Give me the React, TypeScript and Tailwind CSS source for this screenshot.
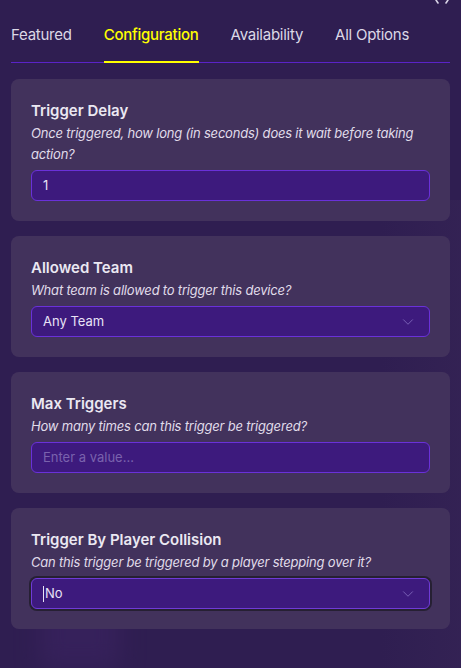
import { ChevronDown } from 'lucide-react';

type Field = {
  title: string;
  desc: string;
  kind: 'input' | 'select';
  value?: string;
  placeholder?: string;
  focused?: boolean;
};

const fields: Field[] = [
  { title: 'Trigger Delay', desc: 'Once triggered, how long (in seconds) does it wait before taking action?', kind: 'input', value: '1' },
  { title: 'Allowed Team', desc: 'What team is allowed to trigger this device?', kind: 'select', value: 'Any Team' },
  { title: 'Max Triggers', desc: 'How many times can this trigger be triggered?', kind: 'input', placeholder: 'Enter a value...' },
  { title: 'Trigger By Player Collision', desc: 'Can this trigger be triggered by a player stepping over it?', kind: 'select', value: 'No', focused: true },
];

const tabs = ['Featured', 'Configuration', 'Availability', 'All Options'];

export default function App() {
  return (
    <div
      className="relative w-[461px] h-[668px] overflow-hidden bg-[#2f1e51] text-[#ece8f4]"
      style={{ fontFamily: 'Inter, "Noto Sans", sans-serif' }}
    >
      {/* blurred backdrop hints */}
      <div className="absolute left-[40px] bottom-0 w-[80px] h-[90px] bg-[#3b2362] opacity-60 blur-md" />
      <div className="absolute right-0 top-[200px] w-[80px] h-[468px] bg-gradient-to-l from-[#3a2858]/40 to-transparent" />
      {/* cut-off close button */}
      <svg className="absolute right-[12px] top-0" width="14" height="5" viewBox="0 0 14 5">
        <path d="M1 0 L3 3 M13 0 L11 3" stroke="#d9d4e6" strokeWidth="1.6" strokeLinecap="round" />
      </svg>

      <div className="relative px-[11px]">
        {/* Tabs */}
        <div className="flex items-end border-b border-[#5a23c8] h-[63px] text-[15px] tracking-[-0.25px]">
          {tabs.map((t) => {
            const active = t === 'Configuration';
            return (
              <div
                key={t}
                className={`mr-[32px] last:mr-0 pb-[15px] -mb-px border-b-2 ${
                  active ? 'border-[#ffff00] text-[#ffff00] font-medium' : 'border-transparent text-[#dcd8e6]'
                }`}
              >
                {t}
              </div>
            );
          })}
        </div>

        {/* Cards */}
        <div className="flex flex-col gap-[15px] mt-[16px]">
          {fields.map((f) => (
            <div key={f.title} className="rounded-[8px] bg-[#43345d]/95 p-[20px]">
              <div className="text-[15px] font-semibold leading-[24px] text-[#ebe8f2]">{f.title}</div>
              <div className="text-[13px] italic leading-[21px] tracking-[-0.2px] text-[#e0dcea]">{f.desc}</div>
              <div
                className={`mt-[5px] h-[31px] flex items-center justify-between rounded-[6px] bg-[#3d1a7d] pl-[11px] pr-[12px] text-[13px] ${
                  f.focused ? 'border border-[#6f3bd6] ring-2 ring-[#262033]' : 'border border-[#6a31d9]'
                }`}
              >
                {f.value ? (
                  <span className="flex items-center text-[#e8e2f6]">
                    {f.focused && <span className="w-px h-[16px] bg-[#e8e2f6] mr-px" />}
                    {f.value}
                  </span>
                ) : (
                  <span className="text-[#7a62ad]">{f.placeholder}</span>
                )}
                {f.kind === 'select' && <ChevronDown size={18} strokeWidth={1.25} className="text-[#7c63b8]" />}
              </div>
            </div>
          ))}
        </div>
      </div>
    </div>
  );
}
